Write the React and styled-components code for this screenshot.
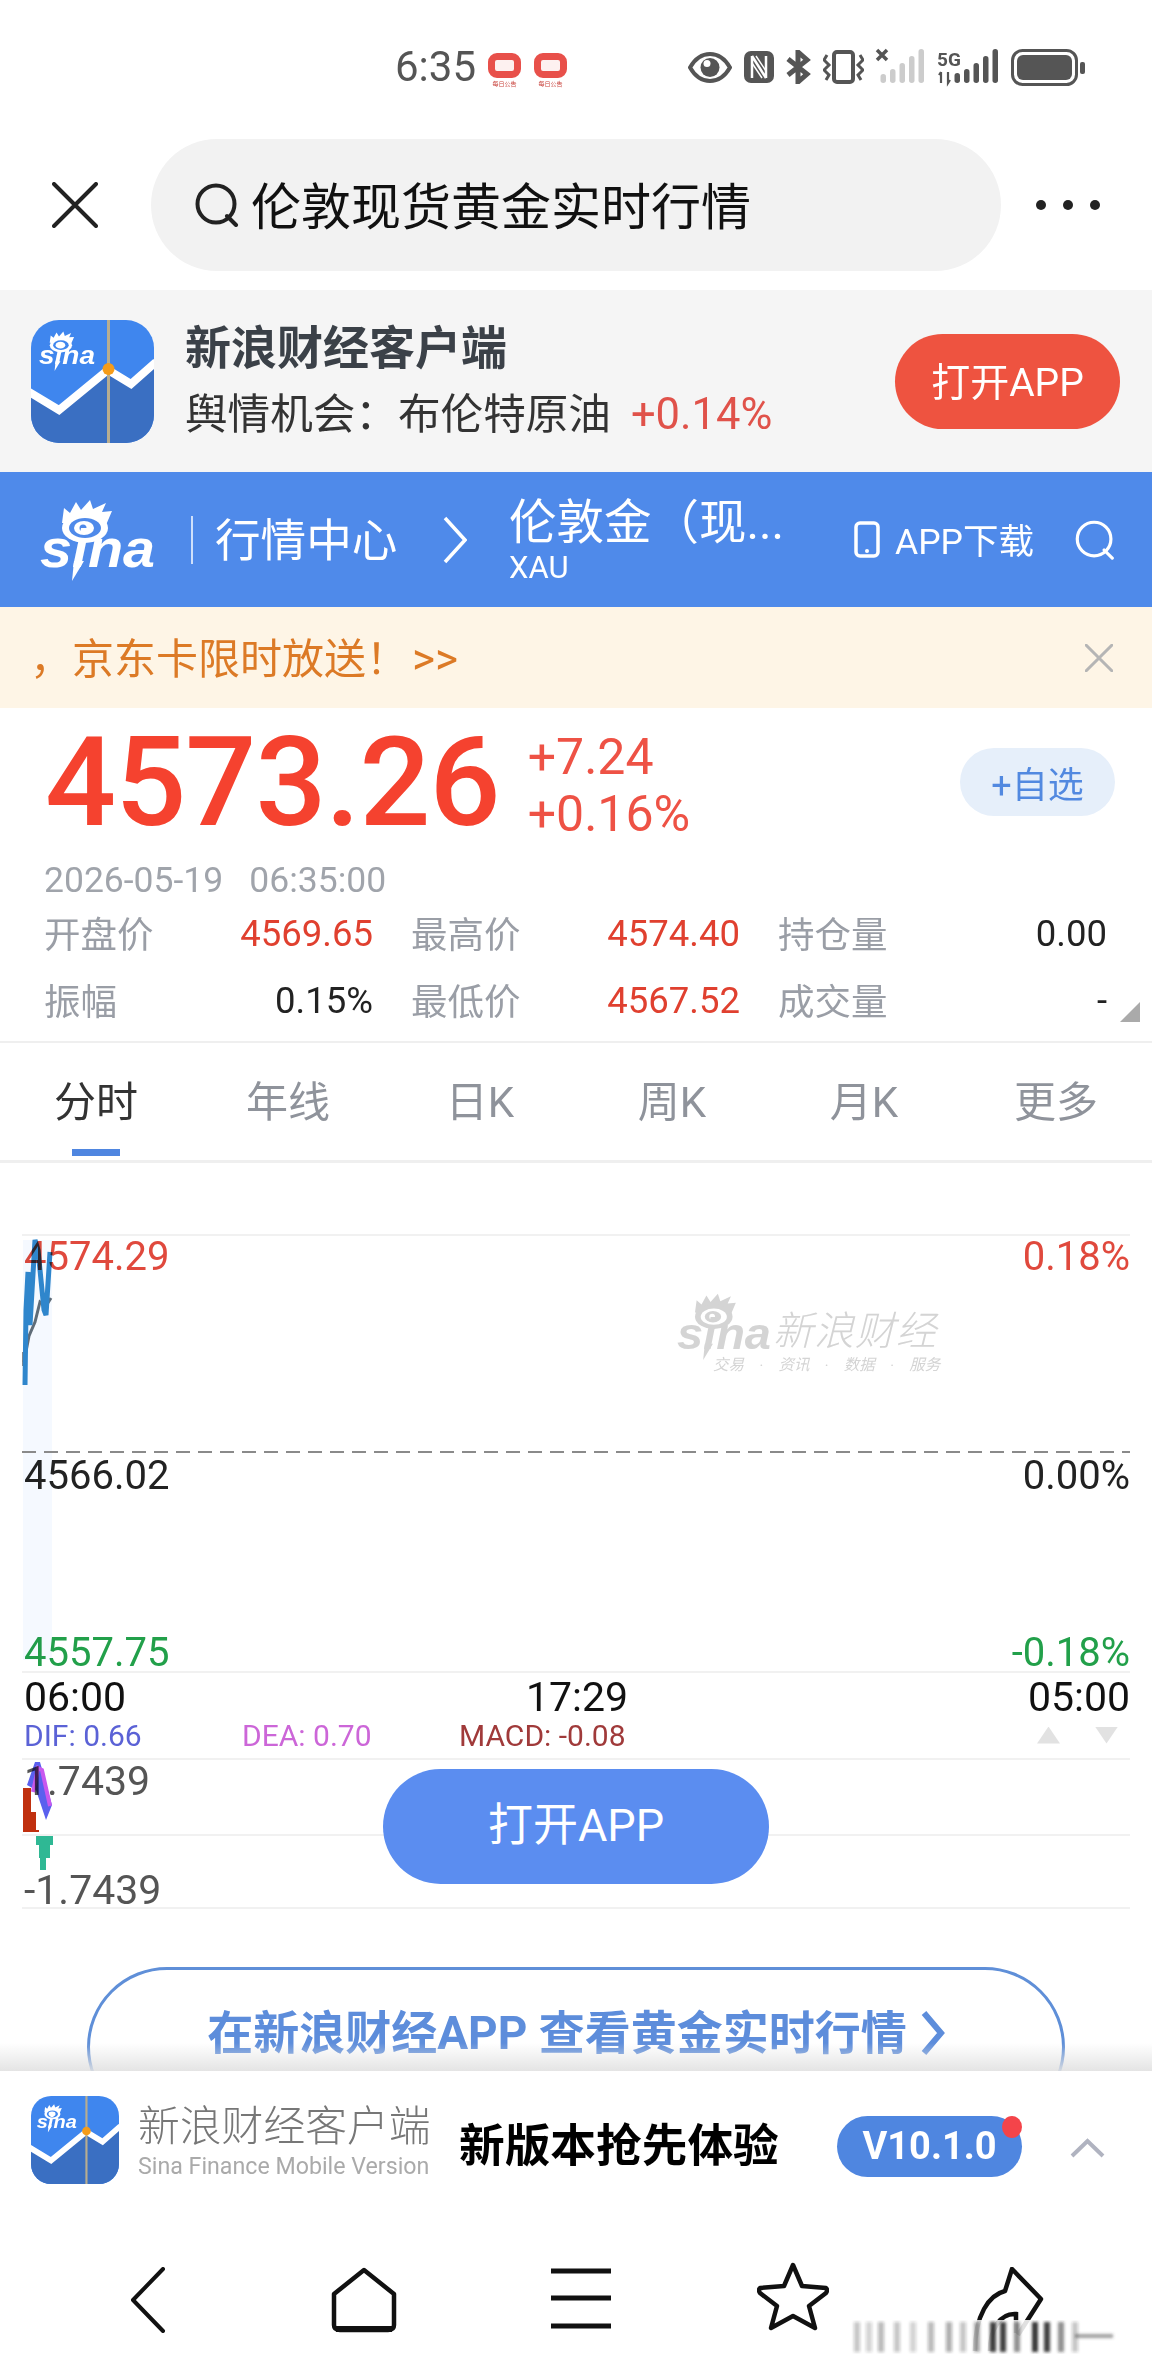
import styled, { createGlobalStyle } from "styled-components";

const GlobalStyle = createGlobalStyle`
  html, body {
    margin: 0;
    padding: 0;
    background: #fff;
  }
  body {
    font-family: Roboto, "Noto Sans CJK SC", sans-serif;
  }
  * {
    box-sizing: border-box;
  }
`;

const Page = styled.div`
  position: relative;
  width: 1152px;
  height: 2376px;
  overflow: hidden;
  background: #fff;
`;

const StatusBar = styled.div`
  height: 134px;
  padding: 0 67px 0 395px;
  display: flex;
  align-items: center;
  justify-content: space-between;
  color: #555;
`;

const StatusGroup = styled.div`
  display: flex;
  align-items: center;
  gap: ${(p) => p.$gap}px;
`;

const Clock = styled.span`
  width: 80px;
  font-size: 42px;
  line-height: 1;
`;

const NotifyBadge = styled.div`
  width: 33px;
  display: flex;
  flex-direction: column;
  align-items: center;
  margin-top: 6px;
`;

const NotifyIcon = styled.div`
  width: 33px;
  height: 25px;
  border: 7px solid #e8504a;
  border-radius: 9px;
  background: #fdf1f0;
`;

const NotifyLabel = styled.span`
  margin-top: 1px;
  font-size: 6px;
  line-height: 9px;
  color: #c9453f;
  white-space: nowrap;
`;

const SearchRow = styled.div`
  height: 156px;
  padding: 5px 52px 19px;
  display: flex;
  align-items: center;
`;

const SearchPill = styled.div`
  width: 850px;
  height: 132px;
  margin-left: 53px;
  padding: 0 0 0 44px;
  display: flex;
  align-items: center;
  gap: 12px;
  border-radius: 66px;
  background: #f2f2f2;
`;

const SearchText = styled.span`
  padding-bottom: 4px;
  font-size: 50px;
  color: #111;
`;

const MoreDots = styled.svg`
  margin-left: auto;
`;

const AppBanner = styled.div`
  height: 182px;
  padding: 0 32px 0 31px;
  display: flex;
  align-items: center;
  gap: 31px;
  background: #f5f5f5;
`;

const BannerCopy = styled.div`
  display: flex;
  flex-direction: column;
  gap: 14px;
`;

const BannerTitle = styled.div`
  font-size: 46px;
  line-height: 52px;
  font-weight: 700;
  color: #3b4148;
`;

const BannerLine = styled.div`
  font-size: 42.6px;
  line-height: 52px;
  color: #333;
  white-space: nowrap;
`;

const BannerChange = styled.span`
  margin-left: 20px;
  font-size: 43.5px;
  color: #e0524a;
`;

const OpenButton = styled.div`
  width: 225px;
  height: 95px;
  margin-left: auto;
  padding-bottom: 4px;
  display: flex;
  align-items: center;
  justify-content: center;
  border-radius: 48px;
  background: #ee5340;
  color: #fff;
  font-size: 39px;
`;

const Header = styled.div`
  height: 135px;
  padding-left: 40px;
  display: flex;
  align-items: center;
  background: #4f8aea;
  color: #fff;
`;

const HeaderDivider = styled.div`
  width: 2px;
  height: 48px;
  margin: 0 22px 0 36px;
  background: #cfe0fb;
`;

const HeaderTitle = styled.span`
  width: 228px;
  padding-bottom: 5px;
  font-size: 45.6px;
  white-space: nowrap;
`;

const Symbol = styled.div`
  width: 345px;
  margin-left: 42px;
  display: flex;
  flex-direction: column;
`;

const SymbolName = styled.span`
  font-size: 47.5px;
  line-height: 56px;
  white-space: nowrap;
`;

const SymbolCode = styled.span`
  font-size: 31px;
  line-height: 34px;
`;

const HeaderDownload = styled.span`
  margin-left: 15px;
  width: 180px;
  padding-bottom: 3px;
  font-size: 35.5px;
  white-space: nowrap;
`;

const Notice = styled.div`
  height: 101px;
  padding: 0 39px 0 30px;
  display: flex;
  align-items: center;
  justify-content: space-between;
  background: #fef5e6;
`;

const NoticeText = styled.span`
  padding-bottom: 5px;
  font-size: 42px;
  color: #dc7a26;
  white-space: nowrap;
`;

const NoticeArrows = styled.span`
  margin-left: 4px;
  font-size: 44px;
`;

const Quote = styled.div`
  position: relative;
  height: 335px;
  border-bottom: 2px solid #efefef;
`;

const PriceRow = styled.div`
  height: 152px;
  padding: 0 37px 4px 45px;
  display: flex;
  align-items: center;
  color: #f5422f;
`;

const LastPrice = styled.span`
  font-size: 125px;
  line-height: 1;
  font-weight: 500;
  letter-spacing: -0.9px;
`;

const Changes = styled.div`
  margin: 8px 0 0 28px;
  display: flex;
  flex-direction: column;
  font-size: 50px;
  line-height: 57px;
  color: #ee5245;
`;

const WatchButton = styled.div`
  width: 155px;
  height: 68px;
  margin-left: auto;
  display: flex;
  align-items: center;
  justify-content: center;
  border-radius: 34px;
  background: #e6effa;
  color: #5289e0;
  font-size: 36px;
`;

const QuoteTime = styled.div`
  height: 40px;
  padding-left: 44px;
  display: flex;
  align-items: center;
  gap: 26px;
  font-size: 35.5px;
  color: #a0a4ab;
`;

const StatGrid = styled.div`
  padding-left: 44px;
  display: grid;
  grid-template-columns: 329px 329px 329px;
  grid-auto-rows: 67px;
  column-gap: 38px;
`;

const StatCell = styled.div`
  display: flex;
  align-items: center;
  justify-content: space-between;
`;

const StatLabel = styled.span`
  padding-bottom: 3px;
  font-size: 36.5px;
  color: #9a9ea6;
`;

const StatValue = styled.span`
  font-size: 36.5px;
  color: ${(p) => (p.$up ? "#e0402f" : "#222")};
`;

const CornerMark = styled.div`
  position: absolute;
  right: 12px;
  bottom: 19px;
  width: 20px;
  height: 20px;
  background: #aaa;
  clip-path: polygon(100% 0, 100% 100%, 0 100%);
`;

const Tabs = styled.div`
  height: 120px;
  display: grid;
  grid-template-columns: repeat(6, 192px);
  border-bottom: 3px solid #efefef;
`;

const Tab = styled.div`
  position: relative;
  display: flex;
  justify-content: center;
  padding-top: 25px;
  font-size: 42px;
  color: ${(p) => (p.$active ? "#333" : "#8f939b")};

  ${(p) =>
    p.$active &&
    `&::after {
      content: "";
      position: absolute;
      left: 72px;
      bottom: 4px;
      width: 48px;
      height: 7px;
      background: #4f86e0;
    }`}
`;

const Chart = styled.div`
  position: relative;
  height: 908px;
  padding: 73px 22px 0 24px;
`;

const ChartDrawing = styled.svg`
  position: absolute;
  left: 0;
  top: 0;
  pointer-events: none;
  mix-blend-mode: multiply;
`;

const AxisRow = styled.div`
  height: 40px;
  margin-top: ${(p) => p.$top || 0}px;
  display: flex;
  align-items: center;
  justify-content: space-between;
  font-size: 40px;
  color: ${(p) => p.$color};
`;

const TimeRow = styled.div`
  height: 50px;
  display: grid;
  grid-template-columns: 1fr 1fr 1fr;
  align-items: center;
  font-size: 41px;
  color: #111;

  span:nth-child(2) {
    text-align: center;
  }
  span:nth-child(3) {
    text-align: right;
  }
`;

const MacdLegend = styled.div`
  height: 26px;
  display: flex;
  align-items: center;
  font-size: 30px;
  white-space: nowrap;
`;

const LegendItem = styled.span`
  width: ${(p) => p.$width}px;
  color: ${(p) => p.$color};
`;

const LegendArrows = styled.div`
  margin-left: auto;
  display: flex;
  gap: 35px;
  padding-right: 12px;
`;

const LegendArrow = styled.div`
  width: 23px;
  height: 17px;
  background: #e2e2e2;
  clip-path: ${(p) =>
    p.$down
      ? "polygon(0 0, 100% 0, 50% 100%)"
      : "polygon(50% 0, 100% 100%, 0 100%)"};
`;

const MacdAxis = styled.div`
  height: 40px;
  margin-top: ${(p) => p.$top}px;
  display: flex;
  align-items: center;
  font-size: 41px;
  color: #555;
`;

const FloatButton = styled.div`
  position: absolute;
  left: 383px;
  top: 606px;
  width: 386px;
  height: 115px;
  padding-bottom: 10px;
  display: flex;
  align-items: center;
  justify-content: center;
  border-radius: 58px;
  background: #5b8df0;
  color: #fff;
  font-size: 45px;
`;

const Watermark = styled.div`
  position: absolute;
  left: 677px;
  top: 130px;
  display: flex;
  align-items: flex-start;
  color: #d4d4d4;
`;

const WatermarkCopy = styled.div`
  margin: 18px 0 0 2px;
  display: flex;
  flex-direction: column;
  font-style: italic;
`;

const WatermarkName = styled.span`
  font-size: 40px;
  line-height: 42px;
  font-weight: 300;
  letter-spacing: 1px;
  white-space: nowrap;
`;

const WatermarkTags = styled.span`
  margin: 1px 0 0 -60px;
  font-size: 15.5px;
  line-height: 22px;
  white-space: pre;
`;

const CtaPill = styled.div`
  position: absolute;
  left: 87px;
  top: 804px;
  width: 978px;
  height: 160px;
  padding-top: 23px;
  display: flex;
  align-items: flex-start;
  justify-content: center;
  gap: 14px;
  border: 3px solid #5f8fd8;
  border-radius: 80px;
  color: #5d8ddb;
  font-size: 46px;
  font-weight: 700;
  line-height: 80px;
`;

const FooterFade = styled.div`
  position: absolute;
  left: 0;
  right: 0;
  bottom: 0;
  height: 28px;
  background: linear-gradient(rgba(225, 225, 225, 0), rgba(225, 225, 225, 0.9));
`;

const Footer = styled.div`
  position: relative;
  height: 305px;
  background: #fff;
`;

const FooterRow = styled.div`
  height: 138px;
  padding: 0 0 0 31px;
  display: flex;
  align-items: center;
`;

const Brand = styled.div`
  width: 293px;
  margin: 2px 0 0 19px;
  display: flex;
  flex-direction: column;
`;

const BrandName = styled.span`
  font-size: 41.8px;
  line-height: 50px;
  font-weight: 300;
  color: #777;
  white-space: nowrap;
`;

const BrandEnglish = styled.span`
  font-size: 23.2px;
  line-height: 28px;
  color: #aaa;
  white-space: nowrap;
`;

const Slogan = styled.span`
  width: 320px;
  margin: 4px 0 0 28px;
  font-size: 45.7px;
  font-weight: 700;
  color: #000;
  white-space: nowrap;
`;

const VersionPill = styled.div`
  position: relative;
  width: 185px;
  height: 61px;
  margin: 12px 0 0 58px;
  display: flex;
  align-items: center;
  justify-content: center;
  border-radius: 31px;
  background: #4f86e0;
  color: #fff;
  font-size: 38px;
  font-weight: 700;
`;

const VersionDot = styled.div`
  position: absolute;
  right: 0;
  top: 0;
  width: 20px;
  height: 22px;
  border-radius: 50%;
  background: #f4444a;
`;

const Collapse = styled.div`
  margin: 16px 0 0 48px;
  display: flex;
`;

const BottomNav = styled.div`
  height: 167px;
  padding: 58px 0 0 40px;
  display: grid;
  grid-template-columns: repeat(5, 215px);
  justify-items: center;
  align-items: start;
`;

const BlurStrip = styled.svg`
  position: absolute;
  left: 850px;
  bottom: 22px;
`;

const SinaLogo = ({ width, fg, bg }) => (
  <svg width={width} viewBox="0 0 115 82" style={{ flex: "none" }}>
    <path
      d="M22 24 L24 9 L30 14 L36 3 L41 11 L50 1 L53 10 L66 4 L62 13 L72 12 L66 26 Z"
      fill={fg}
    />
    <ellipse cx="45" cy="29" rx="23" ry="15" fill={fg} />
    <ellipse cx="45" cy="29" rx="16" ry="10" fill={bg} />
    <ellipse cx="44" cy="29" rx="10" ry="7" fill={fg} />
    <circle cx="43" cy="29" r="3.5" fill={bg} />
    <text
      x="0"
      y="68"
      fontFamily="'Liberation Sans', sans-serif"
      fontSize="54"
      fontWeight="700"
      fontStyle="italic"
      textLength="115"
      lengthAdjust="spacingAndGlyphs"
      fill={fg}
    >
      sina
    </text>
    <path d="M34 62 L44 62 L32 82 Z" fill={fg} />
  </svg>
);

const AppIcon = ({ size }) => (
  <svg width={size} height={size} viewBox="0 0 123 123" style={{ flex: "none" }}>
    <defs>
      <clipPath id={`iconClip${size}`}>
        <rect width="123" height="123" rx="28" />
      </clipPath>
    </defs>
    <g clipPath={`url(#iconClip${size})`}>
      <rect width="123" height="123" fill="#3f86ee" />
      <path d="M0 75 L28 92 L77 54 L100 68 L123 46 V123 H0 Z" fill="#3a6fc2" />
      <path
        d="M-2 72 L28 90 L77 50 L100 64 L125 42"
        fill="none"
        stroke="#fff"
        strokeWidth="8"
      />
      <rect x="76" y="0" width="3" height="123" fill="#b7ad90" />
      <circle cx="77.5" cy="49" r="6" fill="#f59c1a" />
    </g>
    <svg x="8" y="10" width="56" height="42" viewBox="0 0 115 82">
      <path
        d="M22 24 L24 9 L30 14 L36 3 L41 11 L50 1 L53 10 L66 4 L62 13 L72 12 L66 26 Z"
        fill="#fff"
      />
      <ellipse cx="45" cy="29" rx="23" ry="15" fill="#fff" />
      <ellipse cx="45" cy="29" rx="16" ry="10" fill="#3f86ee" />
      <ellipse cx="44" cy="29" rx="10" ry="7" fill="#fff" />
      <text
        x="0"
        y="68"
        fontFamily="'Liberation Sans', sans-serif"
        fontSize="54"
        fontWeight="700"
        fontStyle="italic"
        textLength="115"
        lengthAdjust="spacingAndGlyphs"
        fill="#fff"
      >
        sina
      </text>
      <path d="M34 62 L44 62 L32 82 Z" fill="#fff" />
    </svg>
  </svg>
);

const CloseIcon = ({ size, color, width }) => (
  <svg width={size} height={size} viewBox="0 0 46 46" style={{ flex: "none" }}>
    <path d="M2 2 L44 44 M44 2 L2 44" stroke={color} strokeWidth={width} strokeLinecap="round" />
  </svg>
);

const SearchIcon = ({ size, color, width }) => (
  <svg width={size} height={size} viewBox="0 0 44 44" style={{ flex: "none" }}>
    <circle cx="21" cy="21" r="18.5" fill="none" stroke={color} strokeWidth={width} />
    <path d="M32 33 L41 42" stroke={color} strokeWidth={width} strokeLinecap="round" />
  </svg>
);

const EyeIcon = () => (
  <svg width="44" height="31" viewBox="0 0 44 31">
    <path d="M2 15.5 C8 5 15 2 22 2 C29 2 36 5 42 15.5 C36 26 29 29 22 29 C15 29 8 26 2 15.5 Z" fill="none" stroke="#555" strokeWidth="4" />
    <circle cx="22" cy="15.5" r="9.5" fill="#555" />
    <circle cx="19" cy="11.5" r="3.5" fill="#fff" />
  </svg>
);

const NfcIcon = () => (
  <svg width="30" height="32" viewBox="0 0 30 32">
    <rect x="0" y="0" width="30" height="32" rx="7" fill="#555" />
    <path d="M8 27 V5 M22 27 V5 M8 5 L22 27" fill="none" stroke="#fff" strokeWidth="2.5" />
    <path d="M12 5 L22 20 M8 12 L18 27" fill="none" stroke="#fff" strokeWidth="1.5" />
  </svg>
);

const BluetoothIcon = () => (
  <svg width="25" height="34" viewBox="0 0 25 34">
    <path d="M2 9 L21 24 L12 32 V2 L21 10 L2 25" fill="none" stroke="#555" strokeWidth="5" />
  </svg>
);

const VibrateIcon = () => (
  <svg width="41" height="34" viewBox="0 0 41 34">
    <rect x="11" y="2" width="19" height="30" rx="3" fill="none" stroke="#555" strokeWidth="4" />
    <path d="M4 5 L1 10 L6 15 L1 20 L6 25 L3 30 M37 5 L40 10 L35 15 L40 20 L35 25 L38 30" fill="none" stroke="#555" strokeWidth="3" />
  </svg>
);

const SignalIcon = ({ color, bars, children, width }) => (
  <svg width={width} height="36" viewBox={`0 0 ${width} 36`} style={{ overflow: "visible" }}>
    {bars.map((h, i) => (
      <rect key={i} x={width - (bars.length - i) * 9.5 + 3} y={34 - h} width="5.5" height={h} rx="2.7" fill={color} />
    ))}
    {children}
  </svg>
);

const BatteryIcon = () => (
  <svg width="74" height="37" viewBox="0 0 74 37">
    <rect x="1.5" y="1.5" width="64" height="34" rx="10" fill="none" stroke="#555" strokeWidth="3" />
    <rect x="6" y="6" width="55" height="25" rx="6" fill="#555" />
    <rect x="69" y="13" width="5" height="12" rx="2" fill="#555" />
  </svg>
);

const BackIcon = () => (
  <svg width="36" height="66" viewBox="0 0 36 66">
    <path d="M33 2 L3 33 L33 64" fill="none" stroke="#111" strokeWidth="4" strokeLinejoin="round" strokeLinecap="round" />
  </svg>
);

const HomeIcon = () => (
  <svg width="66" height="66" viewBox="0 0 66 66" style={{ marginLeft: 2 }}>
    <path d="M3 27 L33 3 L63 27 V58 Q63 63 57 63 H9 Q3 63 3 58 Z" fill="none" stroke="#111" strokeWidth="4.5" strokeLinejoin="round" />
    <path d="M5 62 H61" stroke="#111" strokeWidth="6" />
  </svg>
);

const MenuIcon = () => (
  <svg width="62" height="62" viewBox="0 0 62 62" style={{ marginLeft: 6 }}>
    <path d="M1 4 H61 M1 31 H61 M1 59 H61" stroke="#111" strokeWidth="5" />
  </svg>
);

const StarIcon = () => (
  <svg width="72" height="70" viewBox="0 0 72 70" style={{ marginTop: -5 }}>
    <path d="M36 3 L45 24 L69 26 Q71 28 69 31 L52 44 L58 66 L36 54 L14 66 L20 44 L3 31 Q1 28 3 26 L27 24 Z" fill="none" stroke="#111" strokeWidth="4.5" strokeLinejoin="round" />
  </svg>
);

const ShareIcon = () => (
  <svg width="72" height="86" viewBox="0 0 72 86">
    <path d="M3 84 C3 48 17 28 33 24 L40 2 L69 32 L46 68" fill="none" stroke="#111" strokeWidth="4.5" strokeLinejoin="round" />
    <path d="M18 84 C18 62 28 46 44 47 V66" fill="none" stroke="#111" strokeWidth="4.5" />
  </svg>
);

const stripes = [
  [4, 0.25], [16, 0.2], [28, 0.3], [44, 0.25], [60, 0.2], [78, 0.3], [96, 0.35], [110, 0.25],
  [124, 0.4], [140, 0.85], [150, 0.85], [164, 0.5], [182, 0.9], [194, 0.85], [208, 0.5], [222, 0.25],
];

const stats = [
  ["开盘价", "4569.65", true],
  ["最高价", "4574.40", true],
  ["持仓量", "0.00"],
  ["振幅", "0.15%"],
  ["最低价", "4567.52", true],
  ["成交量", "-"],
];

const tabs = ["分时", "年线", "日K", "周K", "月K", "更多"];

export default function App() {
  return (
    <Page>
      <GlobalStyle />
      <StatusBar>
        <StatusGroup $gap={13}>
          <Clock>6:35</Clock>
          <NotifyBadge>
            <NotifyIcon />
            <NotifyLabel>每日公告</NotifyLabel>
          </NotifyBadge>
          <NotifyBadge>
            <NotifyIcon />
            <NotifyLabel>每日公告</NotifyLabel>
          </NotifyBadge>
        </StatusGroup>
        <StatusGroup $gap={12}>
          <EyeIcon />
          <NfcIcon />
          <BluetoothIcon />
          <VibrateIcon />
          <SignalIcon color="#ccc" bars={[9, 14, 20, 27, 34]} width="49">
            <path d="M1 1 L11 11 M11 1 L1 11" stroke="#555" strokeWidth="3.5" />
          </SignalIcon>
          <SignalIcon color="#555" bars={[10, 14, 20, 27, 34]} width="62">
            <text x="0" y="17" fontFamily="Roboto, sans-serif" fontSize="19" fontWeight="700" fill="#555">
              5G
            </text>
            <path d="M4 34 V23 M2 26 L4 23 M11 23 V34 L13 31" stroke="#555" strokeWidth="2.2" fill="none" />
          </SignalIcon>
          <BatteryIcon />
        </StatusGroup>
      </StatusBar>

      <SearchRow>
        <CloseIcon size={46} color="#222" width={4} />
        <SearchPill>
          <SearchIcon size={44} color="#222" width={4} />
          <SearchText>伦敦现货黄金实时行情</SearchText>
        </SearchPill>
        <MoreDots width="64" height="12" viewBox="0 0 64 12">
          <circle cx="5" cy="6" r="5" fill="#222" />
          <circle cx="32" cy="6" r="5" fill="#222" />
          <circle cx="59" cy="6" r="5" fill="#222" />
        </MoreDots>
      </SearchRow>

      <AppBanner>
        <AppIcon size={123} />
        <BannerCopy>
          <BannerTitle>新浪财经客户端</BannerTitle>
          <BannerLine>
            舆情机会：布伦特原油
            <BannerChange>+0.14%</BannerChange>
          </BannerLine>
        </BannerCopy>
        <OpenButton>打开APP</OpenButton>
      </AppBanner>

      <Header>
        <SinaLogo width={115} fg="#fff" bg="#4f8aea" />
        <HeaderDivider />
        <HeaderTitle>行情中心</HeaderTitle>
        <svg width="24" height="48" viewBox="0 0 24 48" style={{ flex: "none" }}>
          <path d="M2 2 L22 24 L2 46" fill="none" stroke="#fff" strokeWidth="3.5" />
        </svg>
        <Symbol>
          <SymbolName>伦敦金（现...</SymbolName>
          <SymbolCode>XAU</SymbolCode>
        </Symbol>
        <svg width="26" height="37" viewBox="0 0 26 37" style={{ flex: "none" }}>
          <rect x="2" y="2" width="22" height="33" rx="4" fill="none" stroke="#fff" strokeWidth="3.5" />
          <circle cx="13" cy="30" r="2" fill="#fff" />
        </svg>
        <HeaderDownload>APP下载</HeaderDownload>
        <SearchIcon size={40} color="#fff" width={3.5} />
      </Header>

      <Notice>
        <NoticeText>
          ，京东卡限时放送！<NoticeArrows>&gt;&gt;</NoticeArrows>
        </NoticeText>
        <CloseIcon size={28} color="#b5b5b5" width={5} />
      </Notice>

      <Quote>
        <PriceRow>
          <LastPrice>4573.26</LastPrice>
          <Changes>
            <span>+7.24</span>
            <span>+0.16%</span>
          </Changes>
          <WatchButton>+自选</WatchButton>
        </PriceRow>
        <QuoteTime>
          <span>2026-05-19</span>
          <span>06:35:00</span>
        </QuoteTime>
        <StatGrid>
          {stats.map(([label, value, up]) => (
            <StatCell key={label}>
              <StatLabel>{label}</StatLabel>
              <StatValue $up={up}>{value}</StatValue>
            </StatCell>
          ))}
        </StatGrid>
        <CornerMark />
      </Quote>

      <Tabs>
        {tabs.map((t, i) => (
          <Tab key={t} $active={i === 0}>
            {t}
          </Tab>
        ))}
      </Tabs>

      <Chart>
        <AxisRow $color="#e0493d">
          <span>4574.29</span>
          <span>0.18%</span>
        </AxisRow>
        <AxisRow $top={179} $color="#222">
          <span>4566.02</span>
          <span>0.00%</span>
        </AxisRow>
        <AxisRow $top={137} $color="#22a04a">
          <span>4557.75</span>
          <span>-0.18%</span>
        </AxisRow>
        <TimeRow>
          <span>06:00</span>
          <span>17:29</span>
          <span>05:00</span>
        </TimeRow>
        <MacdLegend>
          <LegendItem $width={218} $color="#5b62d6">DIF: 0.66</LegendItem>
          <LegendItem $width={217} $color="#cc66d8">DEA: 0.70</LegendItem>
          <LegendItem $width={200} $color="#a03a3a">MACD: -0.08</LegendItem>
          <LegendArrows>
            <LegendArrow />
            <LegendArrow $down />
          </LegendArrows>
        </MacdLegend>
        <MacdAxis $top={13}>
          <span>1.7439</span>
        </MacdAxis>
        <MacdAxis $top={69}>
          <span>-1.7439</span>
        </MacdAxis>

        <Watermark>
          <SinaLogo width={94} fg="#d4d4d4" bg="#fff" />
          <WatermarkCopy>
            <WatermarkName>新浪财经</WatermarkName>
            <WatermarkTags>{"交易    ·    资讯    ·    数据    ·    服务"}</WatermarkTags>
          </WatermarkCopy>
        </Watermark>

        <ChartDrawing width="1152" height="908" viewBox="0 1163 1152 908">
          <rect x="23" y="1240" width="29" height="420" fill="#f3f8ff" opacity="0.8" />
          <path d="M22 1235 H1130 M22 1672 H1130 M22 1759 H1130 M22 1835 H1130 M22 1908 H1130" stroke="#f1f1f1" strokeWidth="2" fill="none" />
          <path d="M22 1452 H1130" stroke="#8a8a8a" strokeWidth="2" strokeDasharray="14 8" fill="none" />
          <path d="M24 1352 V1366" stroke="#111" strokeWidth="3" />
          <polyline points="24,1362 29,1336 35,1322 40,1302 46,1306 51,1298" fill="none" stroke="#5f6c78" strokeWidth="3" />
          <polyline points="25,1385 26,1310 28,1272 30,1325 35,1240 38,1250 42,1290 44,1310 46,1315 50,1252" fill="none" stroke="#2f86cc" strokeWidth="5" />
          <path d="M23 1788 H31 V1812 H36 V1830 H39 V1832 H23 Z" fill="#c0300f" />
          <path d="M35 1762 L27 1785 L36 1790 L46 1820 L52 1805 L40 1762 Z" fill="#5a60ee" />
          <polyline points="33,1792 38,1768 42,1770 50,1806" fill="none" stroke="#c858ee" strokeWidth="4" />
          <path d="M36 1836 H53 V1845 H50 V1858 H46 V1870 H40 V1858 H39 V1845 H36 Z" fill="#2fb894" />
        </ChartDrawing>

        <FloatButton>打开APP</FloatButton>
        <CtaPill>
          <span>在新浪财经APP 查看黄金实时行情</span>
          <svg width="24" height="46" viewBox="0 0 24 46" style={{ marginTop: 17 }}>
            <path d="M3 3 L20 23 L3 43" fill="none" stroke="#5d8ddb" strokeWidth="6" />
          </svg>
        </CtaPill>
        <FooterFade />
      </Chart>

      <Footer>
        <FooterRow>
          <AppIcon size={88} />
          <Brand>
            <BrandName>新浪财经客户端</BrandName>
            <BrandEnglish>Sina Finance Mobile Version</BrandEnglish>
          </Brand>
          <Slogan>新版本抢先体验</Slogan>
          <VersionPill>
            V10.1.0
            <VersionDot />
          </VersionPill>
          <Collapse>
            <svg width="35" height="20" viewBox="0 0 35 20">
              <path d="M2 18 L17.5 3 L33 18" fill="none" stroke="#b0b3c0" strokeWidth="4" />
            </svg>
          </Collapse>
        </FooterRow>
        <BottomNav>
          <BackIcon />
          <HomeIcon />
          <MenuIcon />
          <StarIcon />
          <ShareIcon />
        </BottomNav>
        <BlurStrip width="275" height="34" viewBox="0 0 275 34">
          <defs>
            <filter id="stripBlur">
              <feGaussianBlur stdDeviation="1.4" />
            </filter>
            <linearGradient id="stripFade" x1="0" x2="1" y1="0" y2="0">
              <stop offset="0" stopColor="#fff" stopOpacity="0.75" />
              <stop offset="0.8" stopColor="#fff" stopOpacity="0.9" />
              <stop offset="1" stopColor="#fff" stopOpacity="0.4" />
            </linearGradient>
          </defs>
          <rect width="275" height="34" fill="url(#stripFade)" />
          <g filter="url(#stripBlur)">
            {stripes.map(([x, o]) => (
              <rect key={x} x={x} y="2" width="6" height="30" fill="#222" opacity={o} />
            ))}
            <rect x="225" y="14" width="38" height="4" fill="#444" opacity="0.5" />
          </g>
        </BlurStrip>
      </Footer>
    </Page>
  );
}
